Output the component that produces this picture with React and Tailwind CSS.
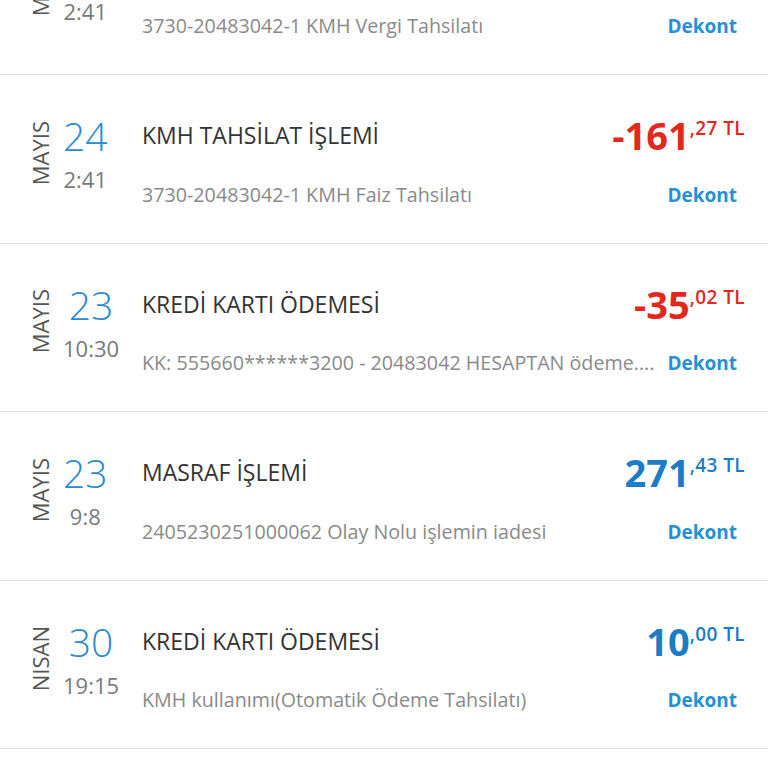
const rows = [
  {
    month: 'MAYIS',
    day: '24',
    time: '2:41',
    title: 'KMH TAHSİLAT İŞLEMİ',
    desc: '3730-20483042-1 KMH Vergi Tahsilatı',
    whole: '-4',
    cents: '46',
    negative: true,
  },
  {
    month: 'MAYIS',
    day: '24',
    time: '2:41',
    title: 'KMH TAHSİLAT İŞLEMİ',
    desc: '3730-20483042-1 KMH Faiz Tahsilatı',
    whole: '-161',
    cents: '27',
    negative: true,
  },
  {
    month: 'MAYIS',
    day: '23',
    time: '10:30',
    title: 'KREDİ KARTI ÖDEMESİ',
    desc: 'KK: 555660******3200 - 20483042 HESAPTAN ödeme....',
    whole: '-35',
    cents: '02',
    negative: true,
  },
  {
    month: 'MAYIS',
    day: '23',
    time: '9:8',
    title: 'MASRAF İŞLEMİ',
    desc: '2405230251000062 Olay Nolu işlemin iadesi',
    whole: '271',
    cents: '43',
    negative: false,
  },
  {
    month: 'NISAN',
    day: '30',
    time: '19:15',
    title: 'KREDİ KARTI ÖDEMESİ',
    desc: 'KMH kullanımı(Otomatik Ödeme Tahsilatı)',
    whole: '10',
    cents: '00',
    negative: false,
  },
];

function TransactionRow({ row }) {
  const amountColor = row.negative ? 'text-[#e2271d]' : 'text-[#1b7cc8]';

  return (
    <div className="h-[168.5px] border-b border-[#e4e4e4] flex items-start pt-[41px]">
      {/* Date block */}
      <div className="w-[142px] shrink-0 flex items-center pl-[29px] gap-[12px]">
        <span
          className="text-[22px] leading-[22px] text-[#555] rotate-180"
          style={{ writingMode: 'vertical-rl' }}
        >
          {row.month}
        </span>
        <div className="flex flex-col items-center">
          <span className="text-[39px] leading-[39px] font-light text-[#2a8ad4]">{row.day}</span>
          <span className="mt-[13px] text-[22px] leading-[22px] text-[#7a7a7a]">{row.time}</span>
        </div>
      </div>

      {/* Details */}
      <div className="flex-1 min-w-0 pr-[23px]">
        <div className="flex justify-between items-start">
          <span className="mt-[4px] text-[23px] leading-[30px] text-[#333]">{row.title}</span>
          <span className={`flex items-start font-bold ${amountColor}`}>
            <span className="text-[38px] leading-[38px]">{row.whole}</span>
            <span className="mt-[3px] text-[19px] leading-[19px] font-semibold tracking-[0.4px]">
              ,{row.cents} TL
            </span>
          </span>
        </div>
        <div className="mt-[27.7px] flex items-baseline gap-[10px]">
          <span className="flex-1 min-w-0 overflow-hidden whitespace-nowrap text-[19.7px] leading-[26px] text-[#8a8a8a]">
            {row.desc}
          </span>
          <span className="mr-[8px] text-[19px] leading-[26px] font-bold text-[#2391d9]">Dekont</span>
        </div>
      </div>
    </div>
  );
}

export default function App() {
  return (
    <div className="h-[768px] overflow-hidden bg-white" style={{ fontFamily: '"Open Sans", "Noto Sans", sans-serif' }}>
      <div className="-mt-[93.5px]">
        {rows.map((row, i) => (
          <TransactionRow key={i} row={row} />
        ))}
      </div>
    </div>
  );
}
